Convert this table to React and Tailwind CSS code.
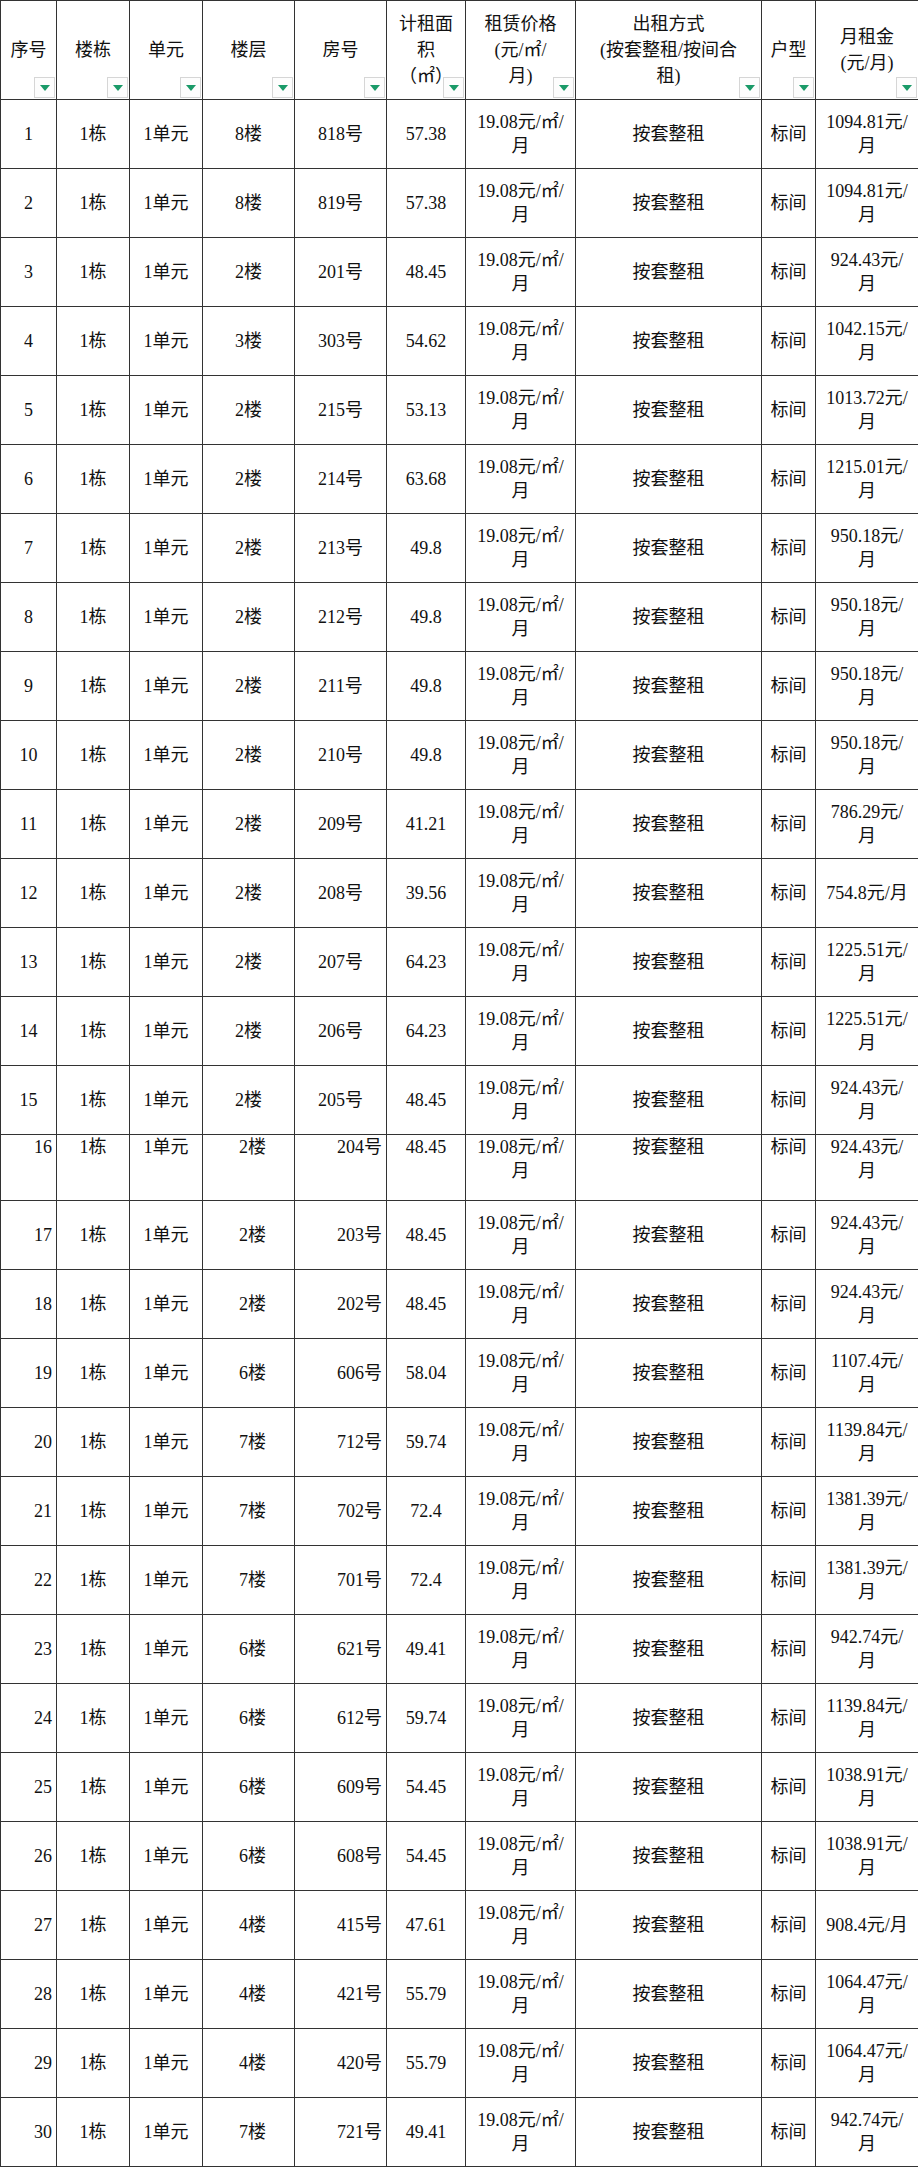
import React from "react";

const FONT = { fontFamily: '"Liberation Serif", "Noto Sans CJK SC", serif' };

const COLS = [56, 73, 73, 92, 92, 79, 110, 186, 54, 103];

const HEADERS = [
  ["序号"],
  ["楼栋"],
  ["单元"],
  ["楼层"],
  ["房号"],
  ["计租面", "积", "（㎡）"],
  ["租赁价格", "(元/㎡/", "月)"],
  ["出租方式", "(按套整租/按间合", "租)"],
  ["户型"],
  ["月租金", "(元/月)"],
];

// [floor, room, area, rent]
const ROWS = [
  ["8楼", "818号", "57.38", "1094.81"],
  ["8楼", "819号", "57.38", "1094.81"],
  ["2楼", "201号", "48.45", "924.43"],
  ["3楼", "303号", "54.62", "1042.15"],
  ["2楼", "215号", "53.13", "1013.72"],
  ["2楼", "214号", "63.68", "1215.01"],
  ["2楼", "213号", "49.8", "950.18"],
  ["2楼", "212号", "49.8", "950.18"],
  ["2楼", "211号", "49.8", "950.18"],
  ["2楼", "210号", "49.8", "950.18"],
  ["2楼", "209号", "41.21", "786.29"],
  ["2楼", "208号", "39.56", "754.8"],
  ["2楼", "207号", "64.23", "1225.51"],
  ["2楼", "206号", "64.23", "1225.51"],
  ["2楼", "205号", "48.45", "924.43"],
  ["2楼", "204号", "48.45", "924.43"],
  ["2楼", "203号", "48.45", "924.43"],
  ["2楼", "202号", "48.45", "924.43"],
  ["6楼", "606号", "58.04", "1107.4"],
  ["7楼", "712号", "59.74", "1139.84"],
  ["7楼", "702号", "72.4", "1381.39"],
  ["7楼", "701号", "72.4", "1381.39"],
  ["6楼", "621号", "49.41", "942.74"],
  ["6楼", "612号", "59.74", "1139.84"],
  ["6楼", "609号", "54.45", "1038.91"],
  ["6楼", "608号", "54.45", "1038.91"],
  ["4楼", "415号", "47.61", "908.4"],
  ["4楼", "421号", "55.79", "1064.47"],
  ["4楼", "420号", "55.79", "1064.47"],
  ["7楼", "721号", "49.41", "942.74"],
];

// rents short enough to sit on one line
const ONE_LINE = ["754.8", "908.4"];

function FilterButton() {
  return (
    <span className="absolute right-px bottom-px flex h-[21px] w-[21px] items-center justify-center border border-[#d6d6d6] bg-[#fdfdfd]">
      <svg width="10" height="6" viewBox="0 0 10 6">
        <polygon points="0,0 10,0 5,6" fill="#1a9a68" />
      </svg>
    </span>
  );
}

export default function App() {
  return (
    <div className="bg-white text-[#111] text-[18px]" style={FONT}>
      <table className="table-fixed border-collapse w-[918px]">
        <colgroup>
          {COLS.map((w, i) => (
            <col key={i} style={{ width: w }} />
          ))}
        </colgroup>
        <thead>
          <tr className="h-[99px]">
            {HEADERS.map((lines, i) => (
              <th
                key={i}
                className="relative border border-[#333] p-0 text-center align-middle font-normal leading-[26px]"
              >
                {lines.map((l, j) => (
                  <div key={j} className="whitespace-nowrap">
                    {l}
                  </div>
                ))}
                <FilterButton />
              </th>
            ))}
          </tr>
        </thead>
        <tbody>
          {ROWS.map(([floor, room, area, rent], i) => {
            const n = i + 1;
            const late = n >= 16;
            const top = n === 16;
            const td = `border border-[#333] p-0 leading-[24px] ${top ? "align-top" : "align-middle"}`;
            return (
              <tr key={n} className={top ? "h-[66px]" : "h-[69px]"}>
                <td className={`${td} ${late ? "text-right pr-1" : "text-center"}`}>{n}</td>
                <td className={`${td} text-center`}>1栋</td>
                <td className={`${td} text-center`}>1单元</td>
                <td className={`${td} text-center ${late ? "pl-2" : ""}`}>{floor}</td>
                <td className={`${td} ${late ? "text-right pr-1" : "text-center"}`}>{room}</td>
                <td className={`${td} text-center`}>{area}</td>
                <td className={`${td} text-center`}>
                  <div>19.08元/㎡/</div>
                  <div>月</div>
                </td>
                <td className={`${td} text-center`}>按套整租</td>
                <td className={`${td} text-center`}>标间</td>
                <td className={`${td} text-center`}>
                  {ONE_LINE.includes(rent) ? (
                    <div className="whitespace-nowrap">{rent}元/月</div>
                  ) : (
                    <>
                      <div>{rent}元/</div>
                      <div>月</div>
                    </>
                  )}
                </td>
              </tr>
            );
          })}
        </tbody>
      </table>
    </div>
  );
}
